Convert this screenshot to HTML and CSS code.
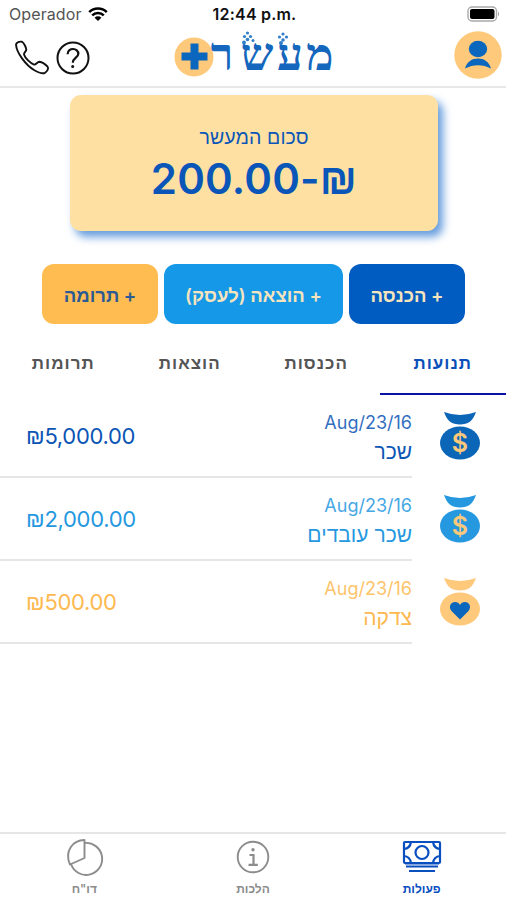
FILE: index.html
```html
<!DOCTYPE html>
<html lang="he" dir="rtl">
<head>
    <meta charset="UTF-8">
    <meta name="viewport" content="width=device-width, initial-scale=1.0">
    <title>מעשר</title>
    <link rel="stylesheet" href="styles.css">
</head>
<body>

<div class="status-bar" dir="ltr">
    <div class="carrier">
        <span>Operador</span>
        <svg width="20" height="15" viewBox="0 0 20 15">
            <path d="M1.2 5.2a12.5 12.5 0 0 1 17.6 0M4.2 8.3a8.2 8.2 0 0 1 11.6 0" fill="none" stroke="#000" stroke-width="2.5"/>
            <path d="M6.6 10.7a4.8 4.8 0 0 1 6.8 0L10 14z"/>
        </svg>
    </div>
    <div class="clock">12:44 p.m.</div>
    <svg class="battery" width="33" height="16" viewBox="0 0 33 16">
        <rect x="1" y="1" width="28.5" height="14" rx="4" fill="#fff" stroke="#a9a9a9" stroke-width="1.4"/>
        <rect x="3" y="3" width="24.5" height="10" rx="2"/>
        <path d="M31 5.5q2 2.5 0 5z" fill="#999"/>
    </svg>
</div>

<header dir="ltr">
    <div class="header-links">
        <svg width="36" height="36" viewBox="0 0 36 36" fill="none" stroke="#111" stroke-width="1.9" stroke-linejoin="round">
            <path d="M2 4.5C2.500 2 5.500 1.300 8 1.800C10 3 12 7.200 12.300 9.500C12.300 11.500 9.800 12.500 10 14.500C11 18 16.500 23.500 20 24.600C22 25 23.200 21.900 25.500 21.700C28 22 31.500 24.500 33.500 26.500C35.200 28.500 33 31.500 31 32.800C28.500 34.200 24.500 32.600 20 30C12 25.200 2.500 13 2 4.500z"/>
        </svg>
        <svg width="36" height="36" viewBox="0 0 36 36" fill="none" stroke="#111" stroke-width="2">
            <circle cx="18" cy="18" r="15.500"/>
            <path d="M12.600 14.200c.2-7.300 11-6.500 10.700-.2-.2 3.700-5.500 3.800-5.500 8.800" stroke-width="2.200"/>
            <circle cx="17.700" cy="26.500" r="1.500" fill="#111" stroke="none"/>
        </svg>
    </div>
    <div class="logo">
        <svg width="162" height="52" viewBox="0 0 162 52">
            <circle cx="20" cy="29" r="19.500" fill="#fec97a"/>
            <path d="M16.500 15.500h8v9h9v8h-9v9h-8v-9h-9v-8h9z" fill="#0b66bd"/>
            <g class="logo-text">
                <text x="48" y="42">ר</text>
                <text x="83" y="42">ש</text>
                <text x="116" y="42">ע</text>
                <text x="146" y="42">מ</text>
            </g>
            <!-- crowns above the letters -->
            <g fill="#2f7fca">
                <circle cx="73.500" cy="5" r="1.600"/><circle cx="70.500" cy="8.500" r="1.600"/><circle cx="76.500" cy="8.500" r="1.600"/>
                <circle cx="73.500" cy="11.500" r="1.800"/><circle cx="79" cy="12.500" r="1.500"/><circle cx="70" cy="14.500" r="2"/>
                <circle cx="109" cy="6" r="1.600"/><circle cx="105.500" cy="9" r="1.600"/><circle cx="112.500" cy="9" r="1.600"/>
                <circle cx="109" cy="12" r="1.800"/><circle cx="107" cy="15" r="2"/>
            </g>
        </svg>
    </div>
    <svg class="avatar" width="48" height="48" viewBox="0 0 48 48">
        <circle cx="24" cy="24" r="23.700" fill="#fec97a"/>
        <ellipse cx="24" cy="18" rx="9.200" ry="8.300" fill="#0b66bd"/>
        <path d="M11 37.500C13 30.500 18 27.500 24 27.500S35 30.500 37 37.500C29 33 19 33 11 37.500z" fill="#0b66bd"/>
    </svg>
</header>

<section class="balance">
    <div class="balance-title">סכום המעשר</div>
    <div class="balance-sum" dir="ltr">200.00-<span class="shekel">₪</span></div>
</section>

<div class="actions">
    <button class="income">+ הכנסה</button>
    <button class="expense">+ הוצאה (לעסק)</button>
    <button class="donation">+ תרומה</button>
</div>

<nav class="tabs">
    <a class="active">תנועות</a>
    <a>הכנסות</a>
    <a>הוצאות</a>
    <a>תרומות</a>
</nav>

<main>
    <div class="row row-income">
        <svg class="bag" width="42" height="50" viewBox="0 0 42 50">
            <path d="M5 1Q21 7 37 1C34 10 29 13.500 21 13.500S8 10 5 1z"/>
            <ellipse cx="21" cy="32" rx="20" ry="16.500"/>
            <text class="dollar" x="21" y="40.500">$</text>
        </svg>
        <div class="row-body">
            <div class="details">
                <div class="date" dir="ltr">Aug/23/16</div>
                <div class="name">שכר</div>
            </div>
            <div class="amount" dir="ltr"><span class="shekel">₪</span>5,000.00</div>
        </div>
    </div>
    <div class="row row-expense">
        <svg class="bag" width="42" height="50" viewBox="0 0 42 50">
            <path d="M5 1Q21 7 37 1C34 10 29 13.500 21 13.500S8 10 5 1z"/>
            <ellipse cx="21" cy="32" rx="20" ry="16.500"/>
            <text class="dollar" x="21" y="40.500">$</text>
        </svg>
        <div class="row-body">
            <div class="details">
                <div class="date" dir="ltr">Aug/23/16</div>
                <div class="name">שכר עובדים</div>
            </div>
            <div class="amount" dir="ltr"><span class="shekel">₪</span>2,000.00</div>
        </div>
    </div>
    <div class="row row-donation">
        <svg class="bag" width="42" height="50" viewBox="0 0 42 50">
            <path d="M5 1Q21 7 37 1C34 10 29 13.500 21 13.500S8 10 5 1z"/>
            <ellipse cx="21" cy="32" rx="20" ry="16.500"/>
            <path class="heart" d="M21 42.500L12.500 34C9 29.500 12 25 16 25C18.500 25 20 26 21 28C22 26 23.500 25 26 25C30 25 33 29.500 29.500 34z"/>
        </svg>
        <div class="row-body">
            <div class="details">
                <div class="date" dir="ltr">Aug/23/16</div>
                <div class="name">צדקה</div>
            </div>
            <div class="amount" dir="ltr"><span class="shekel">₪</span>500.00</div>
        </div>
    </div>
</main>

<footer>
    <a class="active">
        <svg width="40" height="36" viewBox="0 0 40 36" fill="none" stroke="currentColor" stroke-width="2.200">
            <rect x="2" y="3" width="36" height="21" rx="1"/>
            <circle cx="20" cy="13.500" r="6.500"/>
            <path d="M2 10q6-.5 7-7M31 3q1 6.500 7 7M2 17q6 .5 7 7M31 24q1-6.500 7-7"/>
            <path d="M4 27.500h32M7 32h26" stroke-width="2"/>
            <path d="M3 25.500h34" stroke-width="1" opacity=".5"/>
        </svg>
        <span>פעולות</span>
    </a>
    <a>
        <svg width="36" height="36" viewBox="0 0 36 36" fill="none" stroke="currentColor" stroke-width="1.900">
            <circle cx="18" cy="18" r="15.300"/>
            <path d="M14.500 16h4v9.500M13.500 25.800h9.300" stroke-width="2.200"/>
            <circle cx="18" cy="10.800" r="1.700" fill="currentColor" stroke="none"/>
        </svg>
        <span>הלכות</span>
    </a>
    <a>
        <svg width="38" height="38" viewBox="0 0 38 38" fill="none" stroke="currentColor" stroke-width="1.900" stroke-linejoin="round">
            <path d="M19.500 1V19L5 25.500C-1 12 8 1 19.500 1z"/>
            <path d="M19.500 4A16 16 0 1 1 6 25"/>
        </svg>
        <span>דו"ח</span>
    </a>
</footer>

</body>
</html>
```
FILE: styles.css
```css
* {
    box-sizing: border-box;
}

body {
    font-family: Inter, "Liberation Sans", sans-serif;
    background-color: #fff;
    color: #333;
    margin: 0;
    height: 900px;
    display: flex;
    flex-direction: column;
    overflow: hidden;
}

svg {
    display: block;
    flex: none;
    overflow: visible;
}

.shekel {
    font-family: "Liberation Sans", sans-serif;
}

.status-bar {
    display: grid;
    grid-template-columns: 1fr auto 1fr;
    align-items: center;
    height: 28px;
    padding: 0 6px 0 9px;
    font-size: 16px;
}

.carrier {
    display: flex;
    align-items: center;
    gap: 6px;
    color: #555;
    letter-spacing: 0.1px;
}

.clock {
    color: #111;
    font-weight: 600;
    letter-spacing: 0.2px;
}

.battery {
    justify-self: end;
}

header {
    display: grid;
    grid-template-columns: 1fr auto 1fr;
    height: 60px;
    padding: 0 4px 0 14px;
    border-bottom: 2px solid #e8e8ea;
}

.header-links {
    display: flex;
    gap: 5px;
    padding-top: 12px;
}

.logo {
    margin-right: 6px;
}

.logo-text {
    font-family: "Liberation Serif", serif;
    font-size: 46px;
    font-weight: bold;
    fill: #1467bd;
    text-anchor: middle;
}

.avatar {
    justify-self: end;
    margin-top: 3px;
}

.balance {
    width: 368px;
    height: 136px;
    margin: 7px 68px 0 0;
    padding-top: 29px;
    border-radius: 11px;
    background-color: #fee1a2;
    box-shadow: 5px 6px 9px rgba(20, 105, 205, 0.65);
    color: #0a56b8;
    text-align: center;
}

.balance-title {
    font-size: 19.5px;
    line-height: 26px;
    letter-spacing: 0.1px;
}

.balance-sum {
    font-size: 42px;
    font-weight: 600;
    line-height: 58px;
    letter-spacing: 0.2px;
}

.actions {
    display: flex;
    gap: 6px;
    margin-top: 33px;
    padding-right: 41px;
}

.actions button {
    width: 116px;
    height: 60px;
    padding: 3px 0 0;
    border: none;
    border-radius: 12px;
    font-family: inherit;
    font-size: 18.5px;
    font-weight: 600;
    color: #f5e4bd;
}

.actions .income {
    background-color: #005cc0;
}

.actions .expense {
    width: 179px;
    background-color: #1598e8;
}

.actions .donation {
    background-color: #ffbc50;
    color: #2b5a94;
}

.tabs {
    display: flex;
    height: 71px;
}

.tabs a {
    flex: 1;
    padding-top: 26px;
    border-bottom: 2px solid transparent;
    font-size: 17px;
    font-weight: 600;
    line-height: 26px;
    letter-spacing: 1px;
    text-align: center;
    color: #555;
}

.tabs .active {
    color: #0b50b8;
    border-bottom-color: #0a12a8;
}

main {
    flex: 1;
}

.row {
    display: flex;
    height: 83px;
    padding-right: 25px;
}

.bag {
    margin-top: 16px;
    fill: currentColor;
}

.row-income .bag {
    color: #0b66b8;
}

.dollar {
    font-size: 25px;
    font-weight: 600;
    fill: #fec97a;
    text-anchor: middle;
    direction: ltr;
}

.heart {
    fill: #0b66bd;
}

.row-body {
    flex: 1;
    display: flex;
    justify-content: space-between;
    margin-right: 27px;
    padding-left: 26px;
    border-bottom: 2px solid #e6e6e6;
}

.details {
    padding-top: 13px;
    font-size: 18px;
    line-height: 29px;
}

.date {
    text-align: right;
    opacity: 0.85;
}

.name {
    font-size: 21px;
}

.amount {
    padding-top: 26px;
    font-size: 22px;
    line-height: 30px;
    letter-spacing: -0.3px;
}

.row-income {
    color: #0b55b5;
}

.row-expense {
    color: #2598df;
}

.row-donation {
    color: #fdb950;
}

.row-donation .bag {
    color: #fec97a;
}

footer {
    display: flex;
    height: 68px;
    border-top: 2px solid #e6e6e6;
}

footer a {
    flex: 1;
    display: flex;
    flex-direction: column;
    align-items: center;
    justify-content: space-between;
    padding: 5px 0 2px;
    font-size: 12px;
    font-weight: 600;
    line-height: 18px;
    color: #8c8c8c;
}

footer .active {
    color: #0a4fc0;
}
```
